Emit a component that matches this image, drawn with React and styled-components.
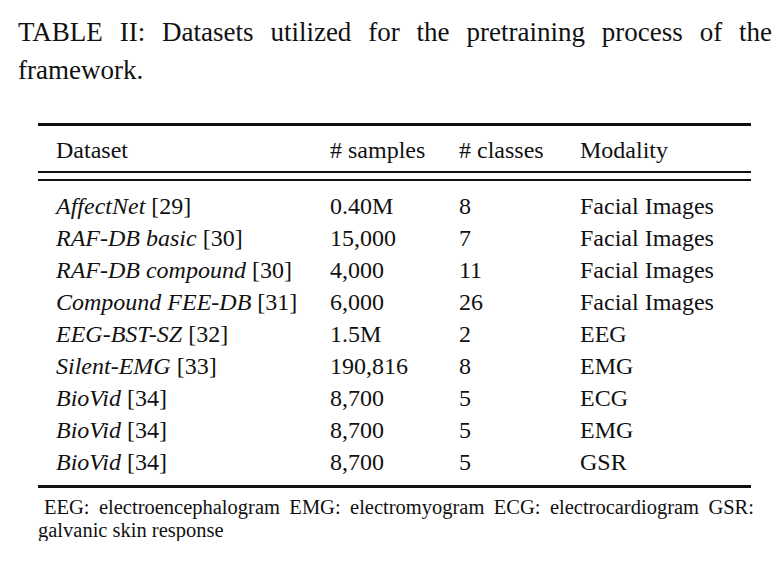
import React from "react";
import styled, { createGlobalStyle } from "styled-components";

const GlobalStyle = createGlobalStyle`
  body {
    margin: 0;
    background: #fff;
    color: #111;
    font-family: "Liberation Serif", "Times New Roman", serif;
  }
`;

const rows = [
  { name: "AffectNet", ref: 29, samples: "0.40M", classes: 8, modality: "Facial Images" },
  { name: "RAF-DB basic", ref: 30, samples: "15,000", classes: 7, modality: "Facial Images" },
  { name: "RAF-DB compound", ref: 30, samples: "4,000", classes: 11, modality: "Facial Images" },
  { name: "Compound FEE-DB", ref: 31, samples: "6,000", classes: 26, modality: "Facial Images" },
  { name: "EEG-BST-SZ", ref: 32, samples: "1.5M", classes: 2, modality: "EEG" },
  { name: "Silent-EMG", ref: 33, samples: "190,816", classes: 8, modality: "EMG" },
  { name: "BioVid", ref: 34, samples: "8,700", classes: 5, modality: "ECG" },
  { name: "BioVid", ref: 34, samples: "8,700", classes: 5, modality: "EMG" },
  { name: "BioVid", ref: 34, samples: "8,700", classes: 5, modality: "GSR" },
];

const App = () => {
  return (
    <>
      <GlobalStyle />
      <Page>
        <Caption>
          TABLE II: Datasets utilized for the pretraining process of the
          framework.
        </Caption>
        <TableBlock>
          <Table>
            <HeadRow>
              <Cell>Dataset</Cell>
              <Cell># samples</Cell>
              <Cell># classes</Cell>
              <Cell>Modality</Cell>
            </HeadRow>
            <DoubleRule />
            <Body>
              {rows.map((row, i) => (
                <Row key={i}>
                  <Cell>
                    <em>{row.name}</em> [{row.ref}]
                  </Cell>
                  <Cell>{row.samples}</Cell>
                  <Cell>{row.classes}</Cell>
                  <Cell>{row.modality}</Cell>
                </Row>
              ))}
            </Body>
          </Table>
          <Footnote>
            EEG: electroencephalogram EMG: electromyogram ECG: electrocardiogram
            GSR: galvanic skin response
          </Footnote>
        </TableBlock>
      </Page>
    </>
  );
};

const Page = styled.div`
  padding: 13px 0 0 18px;
  width: 754px;
`;

const Caption = styled.p`
  margin: 0;
  font-size: 27px;
  line-height: 38px;
  text-align: justify;
`;

const TableBlock = styled.div`
  margin: 34px 0 0 20px;
  width: 716px;
`;

const Table = styled.div`
  width: 713px;
  border-top: 3px solid #111;
  border-bottom: 3px solid #111;
  font-size: 24px;
  line-height: 32px;
`;

const columns = "292px 129px 121px 171px";

const HeadRow = styled.div`
  display: grid;
  grid-template-columns: ${columns};
  padding: 8px 0 5px;
`;

const DoubleRule = styled.div`
  height: 6px;
  border-top: 2px solid #111;
  border-bottom: 2px solid #111;
`;

const Body = styled.div`
  padding: 9px 0 7px;
`;

const Row = styled.div`
  display: grid;
  grid-template-columns: ${columns};
  height: 32px;
`;

const Cell = styled.div`
  white-space: nowrap;

  &:first-child {
    padding-left: 18px;
  }

  em {
    font-style: italic;
  }
`;

const Footnote = styled.p`
  margin: 8px 0 0;
  font-size: 20.5px;
  line-height: 22.5px;
  text-align: justify;
  text-indent: 6px;
`;

export default App;
